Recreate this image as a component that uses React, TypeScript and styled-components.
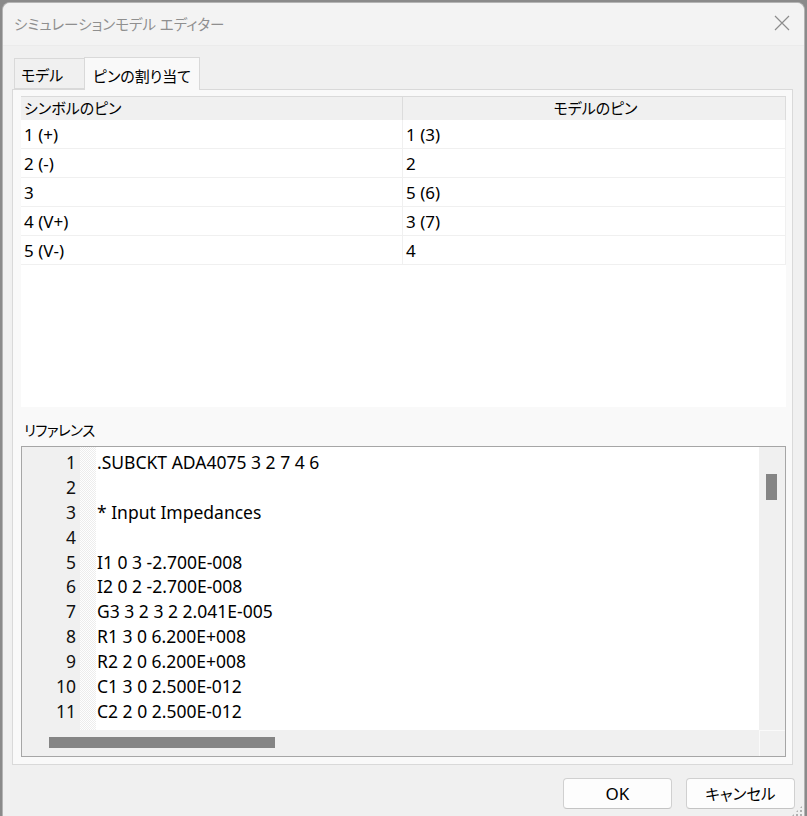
import styled, { createGlobalStyle } from 'styled-components';

// Pin mapping shown in the grid (symbol pin -> model pin).
const pinRows = [
  { symbol: '1 (+)', model: '1 (3)' },
  { symbol: '2 (-)', model: '2' },
  { symbol: '3', model: '5 (6)' },
  { symbol: '4 (V+)', model: '3 (7)' },
  { symbol: '5 (V-)', model: '4' },
];

const codeLines = [
  '.SUBCKT ADA4075 3 2 7 4 6',
  '',
  '* Input Impedances',
  '',
  'I1 0 3 -2.700E-008',
  'I2 0 2 -2.700E-008',
  'G3 3 2 3 2 2.041E-005',
  'R1 3 0 6.200E+008',
  'R2 2 0 6.200E+008',
  'C1 3 0 2.500E-012',
  'C2 2 0 2.500E-012',
];

const uiFont = `"Noto Sans", "Noto Sans CJK JP", sans-serif`;

function App() {
  return (
    <>
      <GlobalStyle />
      <Window>
        <TitleBar>
          <Title>シミュレーションモデル エディター</Title>
          <CloseButton aria-label="close">
            <svg width="16" height="16" viewBox="0 0 16 16">
              <path d="M1 1 L15 15 M15 1 L1 15" stroke="#8c8c8c" strokeWidth="1.2" />
            </svg>
          </CloseButton>
        </TitleBar>

        <Body>
          <TabStrip>
            <Tab $width={71}>モデル</Tab>
            <Tab $active>ピンの割り当て</Tab>
          </TabStrip>

          <TabPanel>
            <PinGrid>
              <HeaderRow>
                <HeaderCell>シンボルのピン</HeaderCell>
                <HeaderCell $center>モデルのピン</HeaderCell>
              </HeaderRow>
              {pinRows.map((r) => (
                <GridRow key={r.symbol}>
                  <Cell>{r.symbol}</Cell>
                  <Cell>{r.model}</Cell>
                </GridRow>
              ))}
            </PinGrid>

            <SectionLabel>リファレンス</SectionLabel>

            <CodeBox>
              <CodeView>
                <Gutter>
                  {codeLines.map((_, i) => (
                    <LineNo key={i}>{i + 1}</LineNo>
                  ))}
                </Gutter>
                <Hatch />
                <CodeText>
                  {codeLines.map((l, i) => (
                    <CodeLine key={i}>{l}</CodeLine>
                  ))}
                </CodeText>
              </CodeView>
              <VScroll>
                <VThumb />
              </VScroll>
              <HScroll>
                <HThumb />
              </HScroll>
              <Corner />
            </CodeBox>
          </TabPanel>

          <ButtonRow>
            <DialogButton $latin>OK</DialogButton>
            <DialogButton>キャンセル</DialogButton>
          </ButtonRow>
        </Body>
        <Grip />
      </Window>
    </>
  );
}

const GlobalStyle = createGlobalStyle`
  html, body {
    margin: 0;
    padding: 0;
    background: #8a8a8a;
    overflow: hidden;
  }
  body {
    font-family: ${uiFont};
  }
`;

const Window = styled.div`
  position: relative;
  margin: 2px 0 0 2px;
  width: 803px;
  height: 816px;
  box-sizing: border-box;
  background: #f0f0f0;
  border: 1px solid #b4b4b4;
  border-bottom: none;
  border-radius: 8px 8px 0 0;
  display: flex;
  flex-direction: column;
  overflow: hidden;
`;

const TitleBar = styled.div`
  height: 42px;
  flex: none;
  background: #f3f3f3;
  border-bottom: 1px solid #ebebeb;
  display: flex;
  align-items: center;
  justify-content: space-between;
  padding: 0 14px 0 11px;
`;

const Title = styled.div`
  font-size: 14.5px;
  color: #8f8f8f;
  font-feature-settings: 'palt';
  margin-top: -2px;
`;

const CloseButton = styled.div`
  width: 16px;
  height: 16px;
  display: flex;
  margin-top: -2px;
`;

const Body = styled.div`
  flex: 1;
  display: flex;
  flex-direction: column;
  padding: 10px 11px 0 9px;
`;

const TabStrip = styled.div`
  display: flex;
  align-items: flex-end;
  height: 33px;
  padding-left: 2px;
  position: relative;
  z-index: 1;
`;

const Tab = styled.div<{ $active?: boolean; $width?: number }>`
  box-sizing: border-box;
  width: ${(p) => (p.$width ? `${p.$width}px` : 'auto')};
  height: ${(p) => (p.$active ? '33px' : '31px')};
  margin-bottom: ${(p) => (p.$active ? '-1px' : '0')};
  margin-left: ${(p) => (p.$active ? '-1px' : '0')};
  padding: 2px ${(p) => (p.$active ? '8px' : '6px')} 0;
  background: ${(p) => (p.$active ? '#f9f9f9' : '#f0f0f0')};
  border: 1px solid #d9d9d9;
  border-bottom: ${(p) => (p.$active ? 'none' : '1px solid #d9d9d9')};
  font-size: 15px;
  font-feature-settings: 'palt';
  color: #000;
  display: flex;
  align-items: center;
`;

const TabPanel = styled.div`
  box-sizing: border-box;
  width: 781px;
  height: 676px;
  background: #f9f9f9;
  border: 1px solid #d9d9d9;
  padding: 6px 6px 0 8px;
  display: flex;
  flex-direction: column;
`;

const PinGrid = styled.div`
  height: 310px;
  background: #fff;
  border-top: 1px solid #dadada;
  display: flex;
  flex-direction: column;
`;

const HeaderRow = styled.div`
  display: grid;
  grid-template-columns: 382px 1fr;
  height: 23px;
  background: #f0f0f0;
`;

const HeaderCell = styled.div<{ $center?: boolean }>`
  border-right: 1px solid #dcdcdc;
  font-size: 15px;
  font-feature-settings: 'palt';
  line-height: 23px;
  padding-left: 3px;
  text-align: ${(p) => (p.$center ? 'center' : 'left')};
`;

const GridRow = styled.div`
  display: grid;
  grid-template-columns: 382px 1fr;
  height: 29px;
  box-sizing: border-box;
  border-bottom: 1px solid #f0f0f0;
`;

const Cell = styled.div`
  border-right: 1px solid #f0f0f0;
  font-size: 17px;
  line-height: 29px;
  padding-left: 3px;
`;

const SectionLabel = styled.div`
  font-size: 14.5px;
  letter-spacing: -0.6px;
  font-feature-settings: 'palt';
  margin: 12px 0 0 3px;
  height: 27px;
  line-height: 22px;
`;

const CodeBox = styled.div`
  box-sizing: border-box;
  height: 311px;
  border: 1px solid #a6a6a6;
  display: grid;
  grid-template-columns: 1fr 26px;
  grid-template-rows: 1fr 26px;
  background: #fff;
`;

const CodeView = styled.div`
  display: flex;
  overflow: hidden;
`;

const Gutter = styled.div`
  width: 58px;
  flex: none;
  background: #f0f0f0;
  padding-top: 3px;
  box-sizing: border-box;
`;

const LineNo = styled.div`
  height: 24.9px;
  line-height: 24.9px;
  text-align: right;
  padding-right: 4px;
  font-size: 17.5px;
  color: #111;
`;

const Hatch = styled.div`
  width: 16px;
  flex: none;
  background-color: #fff;
  background-image: repeating-conic-gradient(#ededed 0 25%, #fff 0 50%);
  background-size: 2px 2px;
`;

const CodeText = styled.div`
  padding: 3px 0 0 1px;
`;

const CodeLine = styled.div`
  height: 24.9px;
  line-height: 24.9px;
  font-size: 17.5px;
  white-space: pre;
  color: #000;
`;

const VScroll = styled.div`
  background: #f0f0f0;
  padding: 27px 0 0 7px;
  box-sizing: border-box;
`;

const VThumb = styled.div`
  width: 11px;
  height: 26px;
  background: #858585;
`;

const HScroll = styled.div`
  background: #f0f0f0;
  padding: 7px 0 0 27px;
  box-sizing: border-box;
`;

const HThumb = styled.div`
  width: 226px;
  height: 11px;
  background: #858585;
`;

const Corner = styled.div`
  background: #f0f0f0;
  border-left: 1px solid #fafafa;
  border-top: 1px solid #fafafa;
`;

const ButtonRow = styled.div`
  display: flex;
  justify-content: flex-end;
  gap: 14px;
  margin-top: 13px;
  margin-right: -2px;
`;

const DialogButton = styled.button<{ $latin?: boolean }>`
  width: 109px;
  height: 31px;
  box-sizing: border-box;
  background: #fdfdfd;
  border: 1px solid #d0d0d0;
  border-bottom-color: #c4c4c4;
  border-radius: 4px;
  font-family: ${uiFont};
  font-size: ${(p) => (p.$latin ? '17px' : '15.5px')};
  font-feature-settings: 'palt';
  color: #000;
  padding: 0;
`;

const Grip = styled.div`
  position: absolute;
  right: 1px;
  bottom: 1px;
  width: 12px;
  height: 12px;
  background-image: radial-gradient(#b0b0b0 0.9px, transparent 1.1px);
  background-size: 4px 4px;
  clip-path: polygon(100% 0, 100% 100%, 0 100%);
`;

export default App;
